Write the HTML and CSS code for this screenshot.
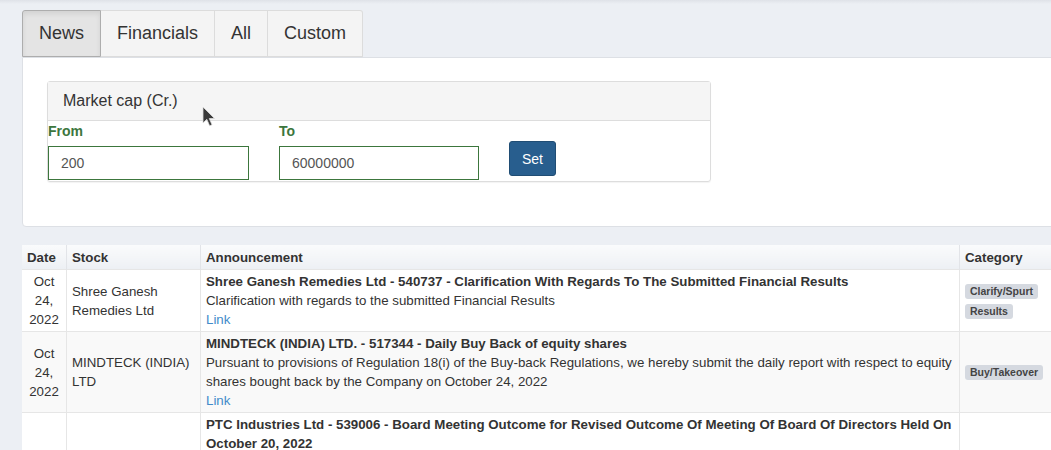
FILE: index.html
```html
<!DOCTYPE html>
<html lang="en">
<head>
    <meta charset="UTF-8">
    <title>Announcements</title>
    <link rel="stylesheet" href="styles.css">
</head>
<body>

<div class="page">
    <div class="tabs">
        <button class="tab active">News</button>
        <button class="tab">Financials</button>
        <button class="tab">All</button>
        <button class="tab">Custom</button>
    </div>

    <div class="panel">
        <div class="filter-box">
            <div class="filter-head">Market cap (Cr.)</div>
            <div class="filter-body">
                <div class="field">
                    <label for="from">From</label>
                    <input type="text" id="from" value="200">
                </div>
                <div class="field">
                    <label for="to">To</label>
                    <input type="text" id="to" value="60000000">
                </div>
                <button class="set-btn">Set</button>
            </div>
        </div>
    </div>

    <table class="news">
        <thead>
            <tr>
                <th class="c-date">Date</th>
                <th class="c-stock">Stock</th>
                <th class="c-ann">Announcement</th>
                <th class="c-cat">Category</th>
            </tr>
        </thead>
        <tbody>
            <tr>
                <td class="c-date">Oct<br>24,<br>2022</td>
                <td class="c-stock">Shree Ganesh Remedies Ltd</td>
                <td class="c-ann">
                    <b>Shree Ganesh Remedies Ltd - 540737 - Clarification With Regards To The Submitted Financial Results</b><br>
                    Clarification with regards to the submitted Financial Results<br>
                    <a href="#">Link</a>
                </td>
                <td class="c-cat">
                    <span class="tag">Clarify/Spurt</span><br>
                    <span class="tag">Results</span>
                </td>
            </tr>
            <tr>
                <td class="c-date">Oct<br>24,<br>2022</td>
                <td class="c-stock">MINDTECK (INDIA) LTD</td>
                <td class="c-ann">
                    <b>MINDTECK (INDIA) LTD. - 517344 - Daily Buy Back of equity shares</b><br>
                    Pursuant to provisions of Regulation 18(i) of the Buy-back Regulations, we hereby submit the daily report with respect to equity shares bought back by the Company on October 24, 2022<br>
                    <a href="#">Link</a>
                </td>
                <td class="c-cat">
                    <span class="tag">Buy/Takeover</span>
                </td>
            </tr>
            <tr>
                <td class="c-date"></td>
                <td class="c-stock"></td>
                <td class="c-ann">
                    <b>PTC Industries Ltd - 539006 - Board Meeting Outcome for Revised Outcome Of Meeting Of Board Of Directors Held On October 20, 2022</b><br>
                    Outcome of board meeting<br>
                    <a href="#">Link</a>
                </td>
                <td class="c-cat"></td>
            </tr>
        </tbody>
    </table>
</div>

<svg class="cursor" width="14" height="22" viewBox="0 0 14 22">
    <path d="M1 1 L1 17 L4.8 13.3 L7.6 19.8 L10 18.8 L7.3 12.5 L12.5 12.5 Z" fill="#3a3a3a" stroke="#ddd" stroke-width="0.8"/>
</svg>

</body>
</html>
```

FILE: styles.css
```css
html {
    overflow: hidden;
}
body {
    font-family: 'Liberation Sans', Arial, sans-serif;
    background: linear-gradient(#dfe2e8, #eceff4 4px) #eceff4;
    margin: 0;
    padding: 0;
    color: #333;
    position: relative;
}
.page {
    padding: 10px 0 0 22px;
    width: 1100px;
}
.tabs {
    display: flex;
}
.tab {
    font-family: 'Liberation Sans', Arial, sans-serif;
    font-size: 18px;
    color: #333;
    height: 47px;
    padding: 0 16px;
    background-color: #f4f4f4;
    border: 1px solid #dcdcdc;
    border-left: none;
    border-radius: 0;
}
.tab:first-child {
    border-left: 1px solid #adadad;
    border-radius: 3px 0 0 0;
}
.tab:last-child {
    border-radius: 0 3px 0 0;
}
.tab.active {
    background-color: #e4e4e4;
    border-color: #adadad;
    border-left: 1px solid #adadad;
    box-shadow: inset 0 3px 5px rgba(0, 0, 0, 0.08);
    padding: 0 16px;
}
.panel {
    background-color: #fff;
    border: 1px solid #dde0e5;
    border-radius: 0 0 0 4px;
    padding: 23px 24px 44px;
    height: 101px;
}
.filter-box {
    width: 662px;
    border: 1px solid #ddd;
    border-radius: 3px;
    box-shadow: 0 1px 1px rgba(0, 0, 0, 0.05);
}
.filter-head {
    background-color: #f5f5f5;
    border-bottom: 1px solid #ddd;
    height: 38px;
    line-height: 38px;
    padding-left: 15px;
    font-family: 'Liberation Sans Narrow', 'Liberation Sans', sans-serif;
    font-size: 16px;
    color: #333;
}
.filter-body {
    display: flex;
    align-items: flex-start;
    gap: 30px;
    height: 60px;
}
.field label {
    display: block;
    font-family: 'Liberation Sans Narrow', 'Liberation Sans', sans-serif;
    font-weight: bold;
    font-size: 14px;
    color: #3c763d;
    height: 25px;
    line-height: 20px;
}
.field input {
    width: 201px;
    height: 34px;
    box-sizing: border-box;
    border: 1px solid #3c763d;
    padding: 0 12px;
    font-family: 'Liberation Sans Narrow', 'Liberation Sans', sans-serif;
    font-size: 14px;
    color: #555;
    margin: 0;
}
.field + .field input {
    width: 200px;
}
.set-btn {
    margin-top: 20px;
    height: 35px;
    width: 47px;
    background-color: #285e8e;
    border: 1px solid #204d74;
    border-radius: 3px;
    color: #fff;
    font-family: 'Liberation Sans Narrow', 'Liberation Sans', sans-serif;
    font-size: 14px;
}
.news {
    margin-top: 18px;
    border-collapse: collapse;
    width: 1100px;
    font-size: 13.3px;
    color: #333;
    background-color: #fff;
}
.news th {
    text-align: left;
    font-weight: bold;
    height: 24px;
    padding: 0 5px;
    background: linear-gradient(#fafbfc, #edf0f4);
    border-left: 1px solid #e2e4e8;
}
.news th:first-child, .news td:first-child {
    border-left: none;
}
.news td {
    padding: 2px 5px;
    line-height: 19px;
    border-left: 1px solid #e6e6e6;
    border-top: 1px solid #e6e6e6;
    vertical-align: middle;
}
.news tbody tr:nth-child(even) td {
    background-color: #f9f9f9;
}
.c-date {
    width: 34px;
    text-align: center;
}
.news th.c-date {
    text-align: left;
}
.c-stock {
    width: 123px;
}
.news td.c-ann {
    width: 748px;
    vertical-align: top;
}
.c-ann a {
    color: #428bca;
    text-decoration: none;
}
.tag {
    display: inline-block;
    background-color: #d5d9e0;
    color: #444;
    font-family: 'Liberation Sans Narrow', 'Liberation Sans', sans-serif;
    font-weight: bold;
    font-size: 10.5px;
    line-height: 15px;
    padding: 0 5px;
    border-radius: 3px;
    margin: 2px 0;
}
.cursor {
    position: absolute;
    left: 202px;
    top: 106px;
}
```
